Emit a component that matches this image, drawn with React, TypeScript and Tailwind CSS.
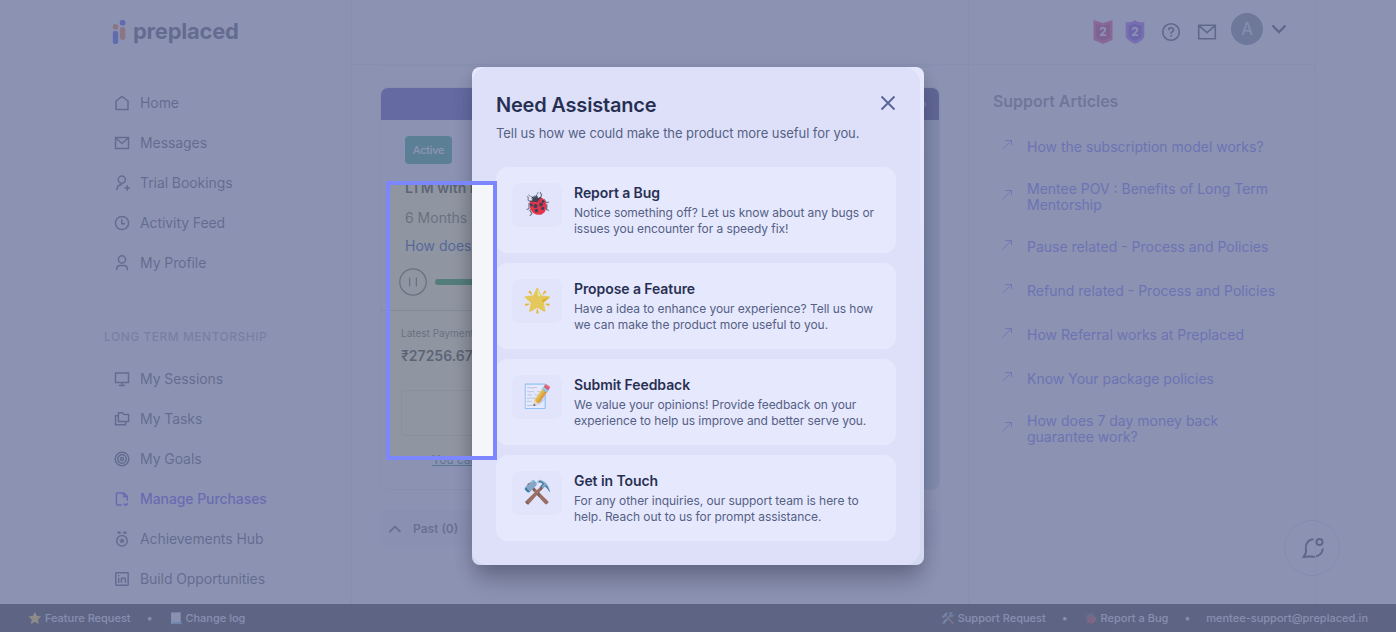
import type { ReactNode } from 'react'

function Icon({ children, className = 'w-4 h-4' }: { children: ReactNode; className?: string }) {
  return (
    <svg className={className} viewBox="0 0 16 16" fill="none" stroke="currentColor" strokeWidth={1.5}>
      {children}
    </svg>
  )
}

const mailPath = <path d="M1.5 2.6h13v10.8h-13zM1.8 3L8 8.600 14.200 3" />

const mainLinks = [
  { label: 'Home', icon: <path d="M2 14.4V6L8 1.5 14 6v8.4z" /> },
  { label: 'Messages', icon: mailPath },
  {
    label: 'Trial Bookings',
    icon: <><circle cx="7.8" cy="4.6" r="3.600" /><path d="M3 15.2v-1.400c0-2.600 1.600-4 5-4.100M10.300 13H16M13.200 10.200v5.600" /></>,
  },
  { label: 'Activity Feed', icon: <><circle cx="8" cy="8" r="6.600" /><path d="M7.800 4.200v4.500h3.200" /></> },
  {
    label: 'My Profile',
    icon: <><circle cx="8" cy="4.4" r="3.600" /><path d="M2.800 15.2v-1.400c0-2 1.200-3.200 3.200-3.200h4c2 0 3.200 1.200 3.200 3.200v1.400" /></>,
  },
]

const mentorshipLinks = [
  { label: 'My Sessions', icon: <path d="M1.500 2h13v9.600h-13zM8 11.600v2.600M4.800 14.500h6.400" /> },
  {
    label: 'My Tasks',
    icon: <path d="M4.400 1.800h4l1.600 1.800h4.600v6.800H4.400zM4.400 4.800H1.500v9h10.100v-3.400" />,
  },
  {
    label: 'My Goals',
    icon: <><circle cx="8" cy="8" r="6.800" /><circle cx="8" cy="8" r="4.200" /><circle cx="8" cy="8" r="1.500" /></>,
  },
  {
    label: 'Manage Purchases',
    active: true,
    icon: <path d="M7.800 14.100H3.200c-.5 0-.8-.3-.8-.8V2.700c0-.5.3-.8.8-.8h6.600l3.400 3.400v4.400M9.600 2v3.500h3.500M9.800 12.600l2 1.800 2.200-2.200" />,
  },
  {
    label: 'Achievements Hub',
    icon: (
      <>
        <path d="M3.600.8h3v1.800h-3zM9.400.8h3v1.800h-3z" fill="currentColor" strokeWidth="0.4" />
        <circle cx="8" cy="9.700" r="5.300" />
        <path d="M8 7.200l.8 1.600 1.800.2-1.300 1.200.3 1.800L8 11.100l-1.600.9.3-1.800L5.400 9l1.800-.2z" fill="currentColor" strokeWidth="0.4" />
      </>
    ),
  },
  {
    label: 'Build Opportunities',
    icon: <><rect x="1.800" y="1.800" width="12.400" height="12.400" rx="0.600" /><path d="M4.700 6.700v5M4.700 4v1.200M7.400 11.700v-5M7.400 8.800c0-2.400 4-2.600 4 0v2.900" /></>,
  },
]

const articles = [
  'How the subscription model works?',
  'Mentee POV : Benefits of Long Term Mentorship',
  'Pause related - Process and Policies',
  'Refund related - Process and Policies',
  'How Referral works at Preplaced',
  'Know Your package policies',
  'How does 7 day money back guarantee work?',
]

const options = [
  { emoji: '🐞', title: 'Report a Bug', text: 'Notice something off? Let us know about any bugs or issues you encounter for a speedy fix!' },
  { emoji: '🌟', title: 'Propose a Feature', text: 'Have a idea to enhance your experience? Tell us how we can make the product more useful to you.' },
  { emoji: '📝', title: 'Submit Feedback', text: 'We value your opinions! Provide feedback on your experience to help us improve and better serve you.' },
  { emoji: '⚒️', title: 'Get in Touch', text: 'For any other inquiries, our support team is here to help. Reach out to us for prompt assistance.' },
]

function NavLink({ label, icon, active }: { label: string; icon: ReactNode; active?: boolean }) {
  return (
    <a
      href="#"
      className={`flex h-10 items-center gap-2.5 pl-[114px] text-sm tracking-[-0.08px] ${active ? 'font-medium text-indigo-600' : 'text-gray-700'}`}
    >
      <Icon>{icon}</Icon>
      {label}
    </a>
  )
}

function Sidebar() {
  return (
    <aside className="w-[352px] shrink-0 border-r border-gray-200">
      <div className="flex h-[83px] pl-[112px] pt-[19px]">
        <svg className="h-[26px] w-[15px]" viewBox="0 0 15 26">
          <rect x="0.800" y="5" width="5.400" height="5.600" rx="2.600" fill="#f97316" />
          <rect x="0.800" y="12" width="5.400" height="13" rx="2" fill="#2f39e8" />
          <rect x="7.800" y="1" width="5.600" height="5.600" rx="2.200" fill="#2f39e8" />
          <rect x="7.800" y="8" width="5.600" height="13" rx="2.400" fill="#f97316" />
        </svg>
        <span className="ml-1.5 text-[22px] font-bold leading-6 tracking-[-0.25px] text-gray-700">preplaced</span>
      </div>
      <nav>
        {mainLinks.map((link) => <NavLink key={link.label} {...link} />)}
      </nav>
      <h3 className="mt-[46px] mb-[14px] pl-[104px] text-xs font-medium leading-4 tracking-[0.5px] text-gray-400">
        LONG TERM MENTORSHIP
      </h3>
      <nav>
        {mentorshipLinks.map((link) => <NavLink key={link.label} {...link} />)}
      </nav>
    </aside>
  )
}

function Purchases() {
  return (
    <main className="w-[617px] shrink-0 border-r border-gray-200">
      <div className="h-[65px] border-b border-gray-200" />
      <div className="ml-7 w-[560px]">
        <div className="mx-0.5 h-0.5 rounded-b-xl border-b border-gray-200" />
        <section className="mt-5 h-[403px] overflow-hidden rounded-lg border border-gray-200 bg-linear-to-r from-white from-50% to-[#c9dce6]">
          <div className="flex h-8 items-center justify-end bg-linear-to-r from-[#3f37b4] to-[#2a2870] pr-3 text-xs text-gray-300">
            ›
          </div>
          <div className="h-[190px] pl-6 pt-4">
            <span className="inline-flex h-7 w-[47px] items-center justify-center rounded bg-[#0f9f74] text-[11px] font-medium tracking-[-0.25px] text-white">
              Active
            </span>
            <h2 className="mt-[14px] text-sm font-semibold leading-5 text-gray-700">LTM with Mentor</h2>
            <p className="mt-2.5 text-sm leading-5 text-gray-500">6 Months</p>
            <a href="#" className="mt-2 block text-sm leading-5 text-blue-700">How does it work?</a>
            <div className="-ml-1.5 mt-3 flex items-center gap-2">
              <svg className="h-7 w-7 text-gray-500" viewBox="0 0 28 28" fill="none" stroke="currentColor" strokeWidth={1.3}>
                <circle cx="14" cy="14" r="13.200" />
                <path d="M10.600 9.500v9M17.400 9.500v9" />
              </svg>
              <div className="h-1.5 w-96 rounded-full bg-[#10a06a]" />
            </div>
          </div>
          <div className="border-t border-gray-300 px-5 pt-4">
            <p className="text-[10px] leading-3 text-gray-500">Latest Payment</p>
            <p className="mt-[7px] text-sm font-semibold leading-5 text-gray-700">₹27256.67</p>
            <div className="mt-6 h-[46px] rounded border border-gray-200" />
            <a href="#" className="ml-[31px] mt-4 block text-xs leading-4 text-teal-700 underline">You can view invoices</a>
          </div>
        </section>
        <section className="mt-5 flex h-[37px] items-center rounded-md bg-gray-100 pl-2 pr-2 text-gray-600">
          <svg className="h-3.5 w-3.5" viewBox="0 0 14 14" fill="none" stroke="currentColor" strokeWidth={1.8}>
            <path d="M1.500 10L7 4.500l5.500 5.500" />
          </svg>
          <span className="ml-[11px] text-xs font-semibold">Past (0)</span>
          <div className="ml-2 h-px flex-1 bg-gray-200" />
        </section>
      </div>
    </main>
  )
}

function HeaderActions() {
  return (
    <div className="flex h-[65px] items-start border-b border-gray-200 pl-[124px] text-gray-800">
      <svg className="mt-[19px] h-[26px] w-5" viewBox="0 0 20 26">
        <path d="M.5 1L10 4l9.500-3v20L10 25 .5 21z" fill="#ec2f76" />
        <path d="M3 5l7 2 7-2v14l-7 3-7-3z" fill="#b8125c" />
        <text x="10" y="17" textAnchor="middle" fontSize="12" fontWeight="700" fill="#fff">2</text>
      </svg>
      <svg className="ml-3 mt-[19px] h-[26px] w-5" viewBox="0 0 20 26">
        <path d="M.7 3Q7 4 10 1q3 3 9.300 2v15q-2 4-9.300 7Q3 22 .7 18z" fill="#9155f5" />
        <path d="M3.500 6q4 .5 6.500-1.500Q12.500 6.500 16.500 6v11Q15 20 10 22q-5-2-6.500-5z" fill="#6b21d8" />
        <text x="10" y="17" textAnchor="middle" fontSize="12" fontWeight="700" fill="#fff">2</text>
      </svg>
      <svg className="ml-4 mt-[22px] h-5 w-5" viewBox="0 0 20 20" fill="none" stroke="currentColor" strokeWidth={1.6}>
        <circle cx="10" cy="10" r="8.300" />
        <path d="M7.600 8.200c0-3.300 4.900-3.200 4.900-.3 0 1.800-2.400 1.900-2.400 3.900M10.100 13v1.600" />
      </svg>
      <svg className="ml-4 mt-[22px] h-5 w-5" viewBox="0 0 20 20" fill="none" stroke="currentColor" strokeWidth={1.6}>
        <path d="M1.700 3.300h16.600v13.400H1.700zM2 3.700l8 7 8-7" />
      </svg>
      <div className="ml-3.5 mt-[13px] flex h-8 w-8 items-center justify-center rounded-full bg-[#64788c] pt-0.5 text-[17px] text-gray-200">A</div>
      <svg className="ml-2 mt-[21px] h-4 w-4" viewBox="0 0 16 16" fill="none" stroke="currentColor" strokeWidth={2.3}>
        <path d="M1.500 4.500L8 11l6.500-6.500" />
      </svg>
    </div>
  )
}

function SupportArticles() {
  return (
    <aside className="w-[347px] shrink-0 border-r border-gray-200">
      <HeaderActions />
      <div className="pl-6">
        <h2 className="mt-[26px] text-base font-semibold leading-5 tracking-[-0.05px] text-gray-500">Support Articles</h2>
        <ul className="mt-[18px] w-[298px] space-y-2">
          {articles.map((title) => (
            <li key={title} className="flex min-h-9 items-center rounded-md bg-gray-50 py-2 pl-[9px] pr-2 text-indigo-500">
              <svg className="relative -top-0.5 h-2.5 w-2.5 shrink-0" viewBox="0 0 10 10" fill="none" stroke="currentColor" strokeWidth={0.8}>
                <path d="M.3 9.500L9.300.700M3 .500h6.500V5" />
              </svg>
              <a href="#" className="ml-[15px] text-sm leading-4">{title}</a>
            </li>
          ))}
        </ul>
      </div>
    </aside>
  )
}

function Footer() {
  return (
    <footer className="absolute inset-x-0 bottom-0 flex h-7 items-center bg-[#151618] px-7 text-[11px] font-medium text-gray-200">
      <span>⭐ Feature Request</span>
      <span className="mx-4">•</span>
      <span>📃 Change log</span>
      <span className="ml-auto">🛠️ Support Request</span>
      <span className="mx-4">•</span>
      <span>🐞 Report a Bug</span>
      <span className="mx-4">•</span>
      <span>mentee-support@preplaced.in</span>
    </footer>
  )
}

function AssistanceModal() {
  return (
    <div className="absolute left-[472px] top-[67px] h-[498px] w-[452px] overflow-hidden rounded-lg bg-linear-to-b from-white to-[#e9edf0]">
      <div className="h-full w-[448px] rounded-2xl bg-[#f5f6fa] px-6 pt-6">
        <div className="flex items-start justify-between">
          <h1 className="text-xl font-semibold leading-7 tracking-[-0.2px] text-gray-900">Need Assistance</h1>
          <svg className="mt-1 h-4 w-4 text-[#505c7c]" viewBox="0 0 16 16" fill="none" stroke="currentColor" strokeWidth={1.9}>
            <path d="M1.500 1.500l13 13M14.500 1.500l-13 13" />
          </svg>
        </div>
        <p className="mt-1 text-[13px] leading-5 tracking-[-0.06px] text-gray-600">
          Tell us how we could make the product more useful for you.
        </p>
        <ul className="mt-6 space-y-2.5">
          {options.map((option) => (
            <li key={option.title} className="flex h-[86px] gap-3 rounded-xl bg-white px-4 py-4">
              <span className="flex h-11 w-[50px] shrink-0 items-center justify-center rounded-lg bg-gray-50 pb-0.5 text-[23px]">
                {option.emoji}
              </span>
              <div>
                <h2 className="text-sm font-semibold leading-5 tracking-[-0.08px] text-gray-900">{option.title}</h2>
                <p className="mt-0.5 text-xs leading-4 tracking-[-0.05px] text-gray-600">{option.text}</p>
              </div>
            </li>
          ))}
        </ul>
      </div>
    </div>
  )
}

export default function App() {
  return (
    <div className="relative h-[632px] w-[1396px] overflow-hidden bg-white font-['Inter','Liberation_Sans',sans-serif]">
      <div className="flex h-full">
        <Sidebar />
        <Purchases />
        <SupportArticles />
      </div>
      <button className="absolute left-[1284px] top-[520px] flex h-14 w-14 items-center justify-center rounded-full border border-gray-300 pl-0.5 text-gray-800">
        <svg className="h-6 w-6" viewBox="0 0 24 24" fill="none" stroke="currentColor" strokeWidth={2}>
          <path d="M12.500 3.300C7 3.300 4 8.500 4.800 13c.2 1.500.6 2.300-.2 4.200L2.600 21c3.400-.6 5-.8 7.400-.4 1.200.2 2.500.4 4 .2M15 20.500c3.500-1 6.500-4 6.800-8" />
          <circle cx="18.500" cy="6" r="3" />
        </svg>
      </button>
      <Footer />
      <div className="absolute inset-0 bg-gray-500/75" />
      <div className="absolute left-[472px] top-[67px] h-[498px] w-[452px] rounded-lg shadow-[0_20px_25px_-5px_rgba(0,0,0,0.25),0_6px_18px_rgba(0,0,0,0.2)]" />
      <AssistanceModal />
      {/* Highlighted region, everything around it is tinted */}
      <div className="absolute left-[386px] top-[181px] h-[279px] w-[111px] border-4 border-indigo-400 shadow-[0_0_0_1500px_rgba(129,140,248,0.2)]" />
    </div>
  )
}
